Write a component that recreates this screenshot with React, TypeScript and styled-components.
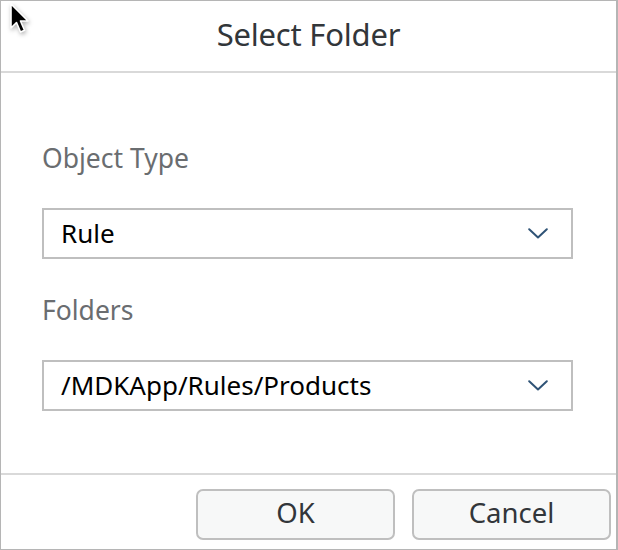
import React from 'react';
import styled, { createGlobalStyle } from 'styled-components';

const GlobalStyle = createGlobalStyle`
  html, body {
    margin: 0;
    padding: 0;
    background: #ffffff;
  }
  body {
    font-family: 'Noto Sans', 'Liberation Sans', sans-serif;
  }
`;

const colors = {
  border: '#b5b5b5',
  divider: '#d9d9d9',
  field: '#bfbfbf',
  label: '#6a6d70',
  text: '#32363a',
  chevron: '#2f5376',
  button: '#f7f8f8',
};

const Chevron: React.FC = () => (
  <svg width="20" height="11" viewBox="0 0 20 11" fill="none">
    <path d="M1.2 1.2 L10 9.4 L18.8 1.2" stroke={colors.chevron} strokeWidth="2" strokeLinecap="round" strokeLinejoin="round" />
  </svg>
);

const Cursor: React.FC = () => (
  <CursorWrap>
    <svg width="26" height="34" viewBox="0 0 26 34">
      <path
        d="M2 2 L2 26 L7.5 20.5 L11.5 30 L15.5 28.3 L11.5 19 L19 19 Z"
        fill="#000"
        stroke="#fff"
        strokeWidth="1.6"
        strokeLinejoin="round"
      />
    </svg>
  </CursorWrap>
);

const Select: React.FC<{ value: string }> = ({ value }) => (
  <Field>
    <FieldValue>{value}</FieldValue>
    <Chevron />
  </Field>
);

const App: React.FC = () => {
  return (
    <>
      <GlobalStyle />
      <Dialog>
        <Header>
          <Title>Select Folder</Title>
        </Header>
        <Body>
          <Label>Object Type</Label>
          <Select value="Rule" />
          <Label>Folders</Label>
          <Select value="/MDKApp/Rules/Products" />
        </Body>
        <Footer>
          <Button>OK</Button>
          <Button>Cancel</Button>
        </Footer>
        <Cursor />
      </Dialog>
    </>
  );
};

const Dialog = styled.div`
  position: relative;
  box-sizing: border-box;
  width: 618px;
  height: 550px;
  border: 1px solid ${colors.border};
  border-right-width: 2px;
  display: flex;
  flex-direction: column;
  background: #fff;
`;

const CursorWrap = styled.div`
  position: absolute;
  left: 8px;
  top: 1px;
  filter: drop-shadow(1px 2px 2px rgba(0, 0, 0, 0.3));
`;

const Header = styled.div`
  height: 70px;
  border-bottom: 2px solid ${colors.divider};
  display: flex;
  align-items: center;
  justify-content: center;
`;

const Title = styled.h1`
  margin: 0 0 4px 0;
  font-size: 31px;
  font-weight: 400;
  color: ${colors.text};
  letter-spacing: -0.2px;
`;

const Body = styled.div`
  flex: 1;
  padding: 69px 43px 0 41px;
  display: flex;
  flex-direction: column;
`;

const Label = styled.div`
  font-size: 26.5px;
  line-height: 32px;
  color: ${colors.label};
  margin-bottom: 34px;
`;

const Field = styled.div`
  box-sizing: border-box;
  height: 51px;
  border: 2px solid ${colors.field};
  display: flex;
  align-items: center;
  justify-content: space-between;
  padding: 0 23px 0 17px;
  margin-bottom: 35px;
`;

const FieldValue = styled.span`
  font-size: 26px;
  line-height: 32px;
  color: #000;
  margin-bottom: 2px;
`;

const Footer = styled.div`
  height: 76px;
  border-top: 2px solid ${colors.divider};
  display: flex;
  justify-content: flex-end;
  align-items: flex-start;
  gap: 17px;
  padding: 14px 5px 0 0;
  box-sizing: border-box;
`;

const Button = styled.button`
  box-sizing: border-box;
  width: 199px;
  height: 51px;
  border: 2px solid ${colors.field};
  border-radius: 7px;
  background: ${colors.button};
  font-family: 'Noto Sans', 'Liberation Sans', sans-serif;
  font-size: 27.5px;
  line-height: 32px;
  color: ${colors.text};
  padding: 0 0 4px 0;
`;

export default App;
